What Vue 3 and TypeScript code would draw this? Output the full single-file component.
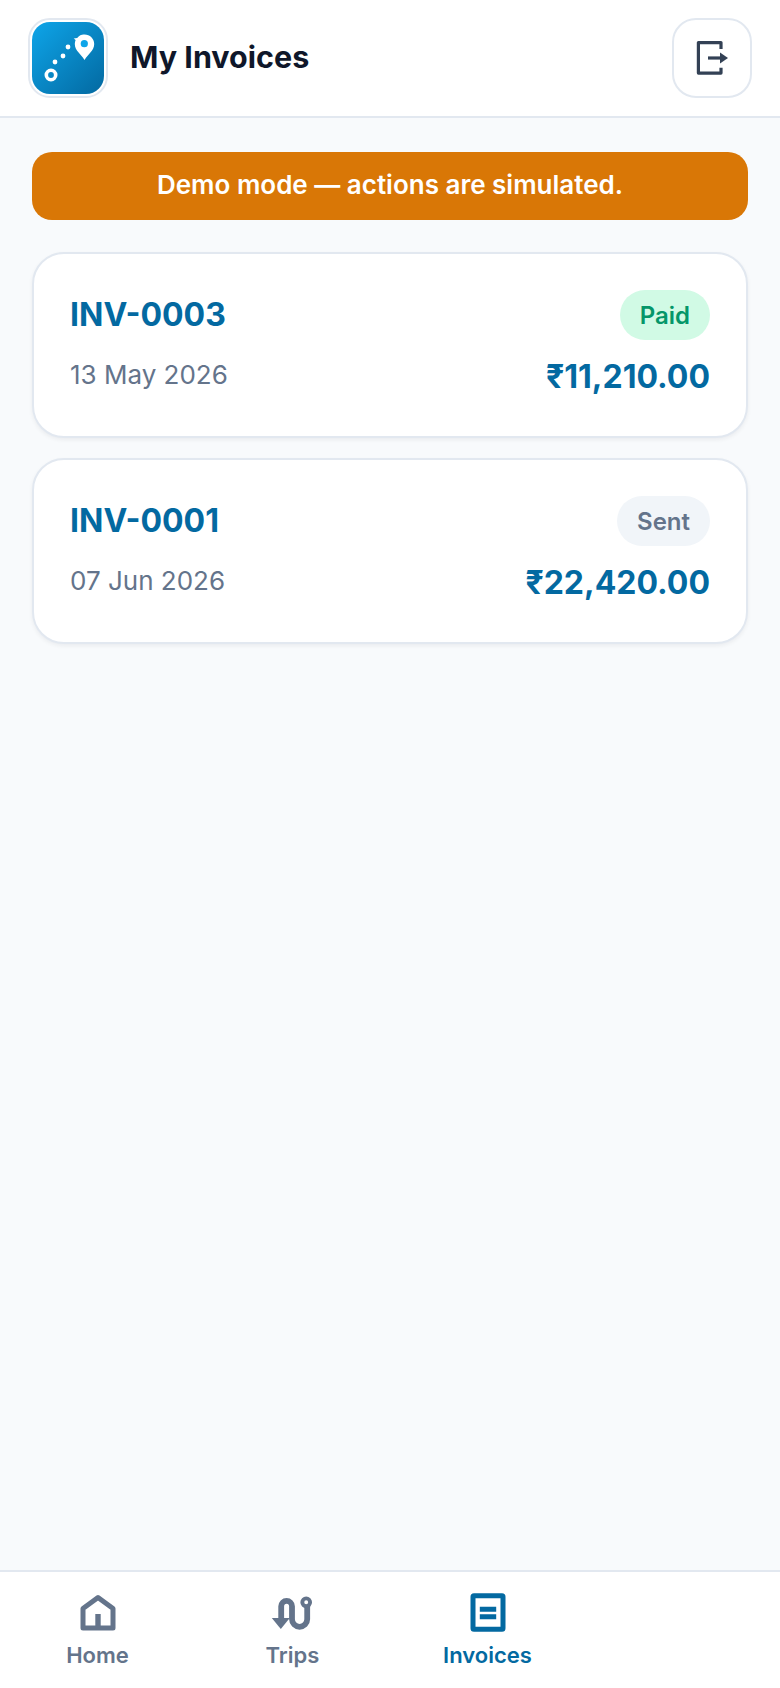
<template>
  <div class="page">
    <header class="topbar">
      <div class="brand">
        <div class="logo">
          <svg width="72" height="72" viewBox="0 0 72 72">
            <defs>
              <linearGradient id="logoGrad" x1="0" y1="0" x2="1" y2="1">
                <stop offset="0" stop-color="#0ea5e9" />
                <stop offset="1" stop-color="#0369a1" />
              </linearGradient>
            </defs>
            <rect width="72" height="72" rx="18" fill="url(#logoGrad)" />
            <circle cx="19" cy="53" r="4.7" fill="none" stroke="#fff" stroke-width="3.6" />
            <circle cx="23" cy="40" r="2.4" fill="#fff" />
            <circle cx="31" cy="34" r="2.4" fill="#fff" />
            <circle cx="36" cy="25" r="2.4" fill="#fff" />
            <path d="M52.500 12.500c5.500 0 9.700 4.200 9.700 9.500 0 3.500-1.700 6-3.800 8.600-1.900 2.200-4 4.400-5.900 7.400-1.900-3-4-5.200-5.900-7.400-2.100-2.600-3.800-5.100-3.800-8.600 0-1.400 .3-2.700 .8-3.900l-1.900-1.700 3.500-.5c1.700-2.300 4.500-3.400 6.300-3.400z" fill="#fff" />
            <circle cx="52.300" cy="21.700" r="3.600" fill="#0ea5e9" />
          </svg>
        </div>
        <h1 class="title">My Invoices</h1>
      </div>
      <button class="logout" type="button" aria-label="Log out">
        <svg width="34" height="34" viewBox="0 0 34 34" fill="none">
          <path d="M26 8V1.600H3.400V32.100H26V26.700" stroke="#334155" stroke-width="3.200" stroke-linejoin="round" />
          <path d="M13 17h13" stroke="#334155" stroke-width="3.200" />
          <path d="M25 11.500l8 5.500-8 5.500z" fill="#334155" />
        </svg>
      </button>
    </header>

    <main class="content">
      <div class="banner">Demo mode — actions are simulated.</div>
      <article v-for="inv in invoices" :key="inv.number" class="card">
        <div class="row">
          <span class="number">{{ inv.number }}</span>
          <span class="badge" :class="`badge--${inv.status.toLowerCase()}`">{{ inv.status }}</span>
        </div>
        <div class="row row--bottom">
          <span class="date">{{ inv.date }}</span>
          <span class="amount">{{ inv.amount }}</span>
        </div>
      </article>
    </main>

    <nav class="tabs">
      <a class="tab">
        <svg width="40" height="40" viewBox="0 0 40 40" fill="none">
          <path d="M20 5.500L35 16.500V36H5V16.500z" stroke="currentColor" stroke-width="5" stroke-linejoin="round" />
          <path d="M20 22v14" stroke="currentColor" stroke-width="5.400" />
        </svg>
        <span>Home</span>
      </a>
      <a class="tab">
        <svg width="44" height="40" viewBox="0 0 44 40" fill="none">
          <path d="M10.200 27V14.300a5.400 5.400 0 0 1 10.800 0V27.200a7.600 7.600 0 0 0 15.200 0V10" stroke="currentColor" stroke-width="5.800" />
          <path d="M0.800 26H18.800L9.800 37z" fill="currentColor" />
          <circle cx="35.200" cy="10.300" r="3.900" fill="#fff" stroke="currentColor" stroke-width="3.900" />
        </svg>
        <span>Trips</span>
      </a>
      <a class="tab tab--active">
        <svg width="40" height="40" viewBox="0 0 40 40" fill="none">
          <rect x="5" y="3.800" width="30" height="33.400" rx="1" stroke="currentColor" stroke-width="5" />
          <path d="M11.800 17.200h16.400M11.800 24.800h16.400" stroke="currentColor" stroke-width="5" />
        </svg>
        <span>Invoices</span>
      </a>
    </nav>
  </div>
</template>

<script setup lang="ts">
interface Invoice {
  number: string;
  status: 'Paid' | 'Sent';
  date: string;
  amount: string;
}

const invoices: Invoice[] = [
  { number: 'INV-0003', status: 'Paid', date: '13 May 2026', amount: '₹11,210.00' },
  { number: 'INV-0001', status: 'Sent', date: '07 Jun 2026', amount: '₹22,420.00' },
];
</script>

<style>
html,
body {
  margin: 0;
  background: #f8fafc;
}
</style>

<style scoped>
.page {
  display: flex;
  flex-direction: column;
  height: 1688px;
  background: #f8fafc;
  font-family: Inter, "Noto Sans", sans-serif;
}

.topbar {
  display: flex;
  align-items: center;
  justify-content: space-between;
  box-sizing: border-box;
  height: 118px;
  padding: 0 28px;
  background: #fff;
  border-bottom: 2px solid #e2e8f0;
}

.brand {
  display: flex;
  align-items: center;
  gap: 22px;
}

.logo {
  display: flex;
  box-sizing: border-box;
  width: 80px;
  height: 80px;
  padding: 2px;
  border: 2px solid #e2e8f0;
  border-radius: 22px;
  background: #fff;
}

.title {
  margin: 0 0 3px;
  font-size: 30.500px;
  font-weight: 700;
  color: #0f172a;
}

.logout {
  display: flex;
  align-items: center;
  justify-content: center;
  box-sizing: border-box;
  width: 80px;
  height: 80px;
  padding: 0;
  border: 2px solid #e2e8f0;
  border-radius: 24px;
  background: #fff;
}

.content {
  flex: 1;
  display: flex;
  flex-direction: column;
  gap: 20px;
  padding: 34px 32px 0;
}

.banner {
  height: 68px;
  margin-bottom: 12px;
  border-radius: 20px;
  background: #d97706;
  color: #fff;
  font-size: 26px;
  font-weight: 600;
  line-height: 66px;
  text-align: center;
}

.card {
  box-sizing: border-box;
  height: 186px;
  padding: 36px;
  border: 2px solid #e2e8f0;
  border-radius: 32px;
  background: #fff;
  box-shadow: 0 2px 4px rgba(15, 23, 42, 0.06);
}

.row {
  display: flex;
  align-items: center;
  justify-content: space-between;
  height: 50px;
}

.row--bottom {
  margin-top: 9px;
}

.number {
  margin-top: -2px;
  font-size: 32px;
  font-weight: 700;
  color: #0369a1;
}

.badge {
  height: 50px;
  padding: 0 20px;
  border-radius: 25px;
  font-size: 24px;
  font-weight: 600;
  line-height: 52px;
}

.badge--paid {
  background: #d1fae5;
  color: #059669;
}

.badge--sent {
  background: #f1f5f9;
  color: #64748b;
}

.date {
  font-size: 26px;
  color: #64748b;
}

.amount {
  margin-top: 4px;
  font-size: 32px;
  font-weight: 700;
  color: #0369a1;
}

.tabs {
  display: grid;
  grid-template-columns: repeat(4, 1fr);
  box-sizing: border-box;
  height: 118px;
  border-top: 2px solid #e2e8f0;
  background: #fff;
}

.tab {
  display: flex;
  flex-direction: column;
  align-items: center;
  gap: 10px;
  padding-top: 20px;
  color: #64748b;
  font-size: 22px;
  font-weight: 600;
}

.tab--active {
  color: #0369a1;
}
</style>
